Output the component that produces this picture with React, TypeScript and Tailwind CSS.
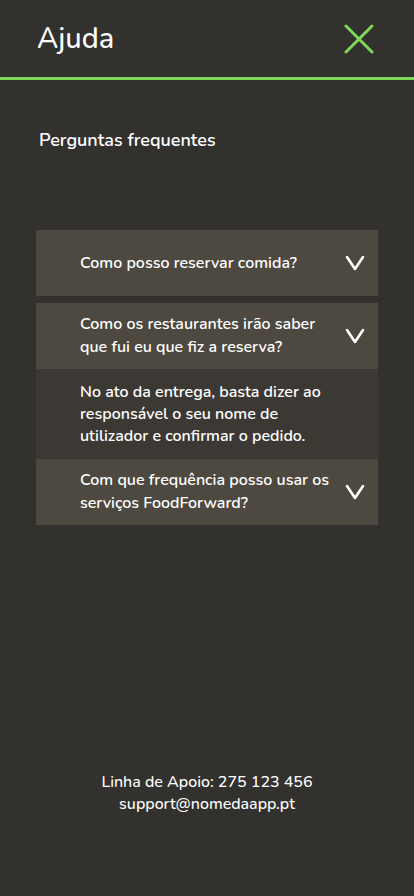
import React from "react";

const font = { fontFamily: '"Nunito", "Open Sans", "Noto Sans", sans-serif' };

function Chevron() {
  return (
    <svg width="22" height="18" viewBox="0 0 22 18" fill="none" className="shrink-0">
      <path d="M3 3 L11 15 L19 3" stroke="white" strokeWidth="2.6" strokeLinecap="round" strokeLinejoin="round" />
    </svg>
  );
}

function Item({ lines }: { lines: string[] }) {
  return (
    <div className="flex h-[66px] items-center justify-between bg-[#4d4840] pl-[44px] pr-[12px]">
      <div className="text-[16px] font-semibold leading-[23px] text-white">
        {lines.map((l, i) => (
          <div key={i} className="whitespace-nowrap">{l}</div>
        ))}
      </div>
      <Chevron />
    </div>
  );
}

export default function App() {
  return (
    <div style={font} className="flex min-h-[896px] w-full flex-col bg-[#33312d] text-white">
      <header className="flex h-[77px] items-center justify-between pl-[37px] pr-[40px]">
        <h1 className="text-[29px] font-medium leading-none">Ajuda</h1>
        <svg width="30" height="30" viewBox="0 0 30 30" fill="none">
          <path d="M2 2 L28 28 M28 2 L2 28" stroke="#7ed957" strokeWidth="3" strokeLinecap="round" />
        </svg>
      </header>
      <div className="h-[3px] w-full bg-[#7ed957]" />
      <h2 className="mt-[48px] pl-[39px] text-[18px] font-semibold leading-[24px]">Perguntas frequentes</h2>
      <div className="mx-[36px] mt-[78px] flex flex-col">
        <Item lines={["Como posso reservar comida?"]} />
        <div className="mt-[7px]">
          <Item lines={["Como os restaurantes irão saber", "que fui eu que fiz a reserva?"]} />
        </div>
        <div className="bg-[#3c3934] py-[12px] pl-[44px] text-[16px] font-semibold leading-[22px]">
          <div>No ato da entrega, basta dizer ao</div>
          <div>responsável o seu nome de</div>
          <div>utilizador e confirmar o pedido.</div>
        </div>
        <Item lines={["Com que frequência posso usar os", "serviços FoodForward?"]} />
      </div>
      <div className="flex-1" />
      <footer className="pb-[81px] text-center text-[16px] font-medium leading-[22px]">
        <div>Linha de Apoio: 275 123 456</div>
        <div>support@nomedaapp.pt</div>
      </footer>
    </div>
  );
}
